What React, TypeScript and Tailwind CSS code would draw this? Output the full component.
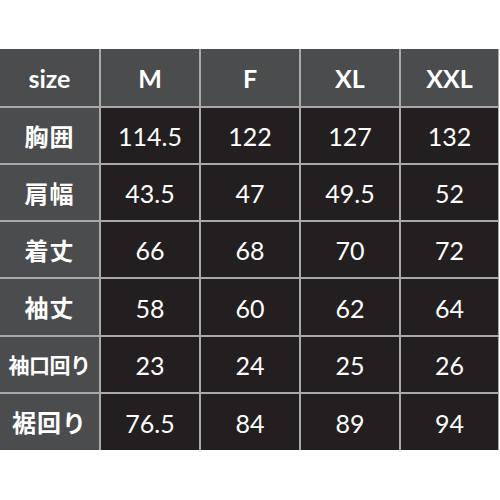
import { Fragment } from "react";

const headers = ["size", "M", "F", "XL", "XXL"];

const rows: { label: string; small?: boolean; values: string[] }[] = [
  { label: "胸囲", values: ["114.5", "122", "127", "132"] },
  { label: "肩幅", values: ["43.5", "47", "49.5", "52"] },
  { label: "着丈", values: ["66", "68", "70", "72"] },
  { label: "袖丈", values: ["58", "60", "62", "64"] },
  { label: "袖口回り", small: true, values: ["23", "24", "25", "26"] },
  { label: "裾回り", values: ["76.5", "84", "89", "94"] },
];

const jp = { fontFamily: '"Noto Sans CJK JP", "Noto Sans", sans-serif' };
const num = { fontFamily: '"Lato", "Noto Sans", sans-serif' };

export default function App() {
  return (
    <div className="w-[500px] h-[500px] bg-white pt-[49px]">
      <div className="w-[499px] bg-[#a9a9a9] pr-[1px]">
        <div className="grid grid-cols-[99px_98px_98px_98px_97px] grid-rows-[57px_55px_55px_55px_56px_55px_56px] gap-[2px]">
          {headers.map((h) => (
            <div
              key={h}
              className="bg-[#4b4c4e] flex items-center justify-center text-white text-[25px] font-bold pt-[2px]"
              style={num}
            >
              {h}
            </div>
          ))}
          {rows.map((r) => (
            <Fragment key={r.label}>
              <div
                className={`bg-[#4b4c4e] flex items-center justify-center text-white font-bold ${
                  r.small ? "text-[21px] tracking-[-0.5px]" : "text-[24px] tracking-[1px]"
                }`}
                style={jp}
              >
                {r.label}
              </div>
              {r.values.map((v, i) => (
                <div
                  key={r.label + i}
                  className="bg-[#231f20] flex items-center justify-center text-white text-[25px] pt-[3px]"
                  style={num}
                >
                  {v}
                </div>
              ))}
            </Fragment>
          ))}
        </div>
      </div>
    </div>
  );
}
